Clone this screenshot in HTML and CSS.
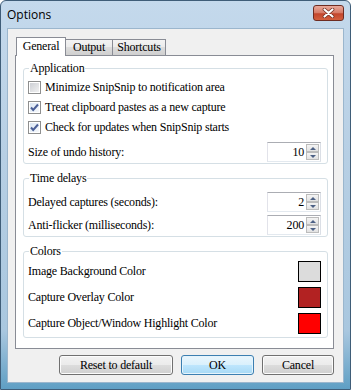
FILE: index.html
```html
<!DOCTYPE html>
<html>
<head>
    <link rel="stylesheet" href="styles.css">
</head>
<body>
<div class="window">
    <div class="titlebar">
        <span class="title">Options</span>
        <span class="close-button">
            <svg width="13" height="10" viewBox="0 0 13 10">
                <path d="M2.5 1.5 L10.5 8.5 M10.5 1.5 L2.5 8.5" stroke="#6b2a1e" stroke-width="3.6" stroke-linecap="round"/>
                <path d="M2.5 1.5 L10.5 8.5 M10.5 1.5 L2.5 8.5" stroke="#ffffff" stroke-width="2.2" stroke-linecap="round"/>
            </svg>
        </span>
    </div>
    <div class="client">
        <div class="tabs">
            <span class="tab tab-active">General</span>
            <span class="tab">Output</span>
            <span class="tab">Shortcuts</span>
        </div>
        <div class="tab-page">
            <!-- Application -->
            <fieldset class="group group-app">
                <legend>Application</legend>
                <div class="check-row"><span class="checkbox"></span>Minimize SnipSnip to notification area</div>
                <div class="check-row"><span class="checkbox checked"><svg width="11" height="11" viewBox="0 0 11 11"><path d="M2 5.5 L4.2 8 L9 2.5" fill="none" stroke="#4a5f97" stroke-width="2"/></svg></span>Treat clipboard pastes as a new capture</div>
                <div class="check-row"><span class="checkbox checked"><svg width="11" height="11" viewBox="0 0 11 11"><path d="M2 5.5 L4.2 8 L9 2.5" fill="none" stroke="#4a5f97" stroke-width="2"/></svg></span>Check for updates when SnipSnip starts</div>
                <div class="field-row undo-row">
                    <span>Size of undo history:</span>
                    <span class="spinner"><span class="spin-value">10</span><span class="spin-buttons"><span class="spin-up"></span><span class="spin-down"></span></span></span>
                </div>
            </fieldset>

            <!-- Time delays -->
            <fieldset class="group group-delays">
                <legend>Time delays</legend>
                <div class="field-row">
                    <span>Delayed captures (seconds):</span>
                    <span class="spinner"><span class="spin-value">2</span><span class="spin-buttons"><span class="spin-up"></span><span class="spin-down"></span></span></span>
                </div>
                <div class="field-row">
                    <span>Anti-flicker (milliseconds):</span>
                    <span class="spinner"><span class="spin-value">200</span><span class="spin-buttons"><span class="spin-up"></span><span class="spin-down"></span></span></span>
                </div>
            </fieldset>

            <!-- Colors -->
            <fieldset class="group group-colors">
                <legend>Colors</legend>
                <div class="color-row">
                    <span>Image Background Color</span>
                    <span class="swatch swatch-bg"></span>
                </div>
                <div class="color-row">
                    <span>Capture Overlay Color</span>
                    <span class="swatch swatch-overlay"></span>
                </div>
                <div class="color-row">
                    <span>Capture Object/Window Highlight Color</span>
                    <span class="swatch swatch-highlight"></span>
                </div>
            </fieldset>
        </div>
        <div class="button-row">
            <button class="button button-reset">Reset to default</button>
            <button class="button button-ok">OK</button>
            <button class="button button-cancel">Cancel</button>
        </div>
    </div>
</div>
</body>
</html>
```

FILE: styles.css
```css
body {
    margin: 0;
    font-family: "Liberation Serif", serif;
    font-size: 12px;
    letter-spacing: -0.2px;
    color: #000000;
}

.window {
    width: 351px;
    height: 390px;
    box-sizing: border-box;
    display: flex;
    flex-direction: column;
    padding: 0 6px 6px 6px;
    border: 1px solid #3f5d78;
    border-radius: 6px 6px 0 0;
    background: linear-gradient(#c4d9ec, #b7cfe4 40%, #a9c7df 85%, #5f9fc4);
}

.titlebar {
    height: 27px;
    display: flex;
    justify-content: space-between;
    align-items: flex-start;
}

.title {
    font-family: "Open Sans", sans-serif;
    font-size: 12px;
    letter-spacing: 0;
    margin-top: 5px;
    color: #000000;
}

.close-button {
    width: 31px;
    height: 16px;
    box-sizing: border-box;
    margin-top: 4px;
    border: 1px solid #6d2c22;
    border-radius: 3px;
    background: linear-gradient(#e9a99b, #d67a66 50%, #c2452c 55%, #d3603f);
    display: flex;
    align-items: center;
    justify-content: center;
}

.client {
    flex: 1;
    background-color: #f0f0f0;
    border: 1px solid #9bb6cd;
    padding: 8px 9px 0 7px;
}

/* tabs */
.tabs {
    display: flex;
    align-items: flex-end;
    height: 18px;
    padding-left: 2px;
}

.tab {
    height: 16px;
    box-sizing: border-box;
    border: 1px solid #898c95;
    border-bottom: none;
    background: linear-gradient(#f3f3f3, #ebebeb 50%, #dddddd 50%, #cfcfcf);
    line-height: 15px;
    text-align: center;
    margin-left: -1px;
}

.tab:nth-child(1) { width: 50px; }
.tab:nth-child(2) { width: 48px; }
.tab:nth-child(3) { width: 54px; }

.tab-active {
    height: 19px;
    margin-bottom: -1px;
    background: #ffffff;
    position: relative;
    z-index: 1;
    line-height: 17px;
}

.tab-page {
    height: 294px;
    box-sizing: border-box;
    border: 1px solid #898c95;
    background-color: #ffffff;
    padding: 6px 5px 0 7px;
}

/* group boxes */
.group {
    margin: 0;
    border: 1px solid #d5dfe5;
    border-radius: 3px;
    padding: 1px 6px 1px 4px;
    min-width: 0;
}

.group legend {
    padding: 0 1px;
    margin-left: 1px;
    line-height: 13px;
}

.group-delays {
    margin-top: 8px;
    padding-top: 7px;
}

.group-colors {
    margin-top: 8px;
    padding-top: 3px;
    padding-bottom: 3px;
}

.check-row {
    height: 20px;
    display: flex;
    align-items: center;
}

.group-app .check-row:first-of-type {
    margin-top: 1px;
}

.checkbox {
    width: 13px;
    height: 13px;
    box-sizing: border-box;
    margin-right: 4px;
    border: 1px solid #8e8f8f;
    background: linear-gradient(135deg, #c9ccd2, #f4f4f4);
    box-shadow: inset 0 0 0 1px #ffffff;
    display: flex;
    align-items: center;
    justify-content: center;
}

.checkbox.checked {
    background: linear-gradient(135deg, #d9e6f4, #f7f9fc);
}

.field-row {
    height: 20px;
    display: flex;
    justify-content: space-between;
    align-items: center;
}

.field-row + .field-row {
    margin-top: 3px;
}

.undo-row {
    margin-top: 5px;
}

/* number spinners */
.spinner {
    width: 54px;
    height: 20px;
    box-sizing: border-box;
    border: 1px solid #abadb3;
    border-color: #abadb3 #dbdfe6 #e3e9ef #e2e3ea;
    background-color: #ffffff;
    display: flex;
    align-items: stretch;
}

.spin-value {
    flex: 1;
    text-align: right;
    line-height: 18px;
    padding-right: 2px;
}

.spin-buttons {
    width: 13px;
    display: flex;
    flex-direction: column;
    margin: 1px 1px 1px 0;
}

.spin-up,
.spin-down {
    flex: 1;
    box-sizing: border-box;
    border: 1px solid #bcbcbc;
    background: linear-gradient(#f4f4f4, #e2e2e2);
    display: flex;
    align-items: center;
    justify-content: center;
}

.spin-up::after {
    content: "";
    border-left: 3px solid transparent;
    border-right: 3px solid transparent;
    border-bottom: 3px solid #4d6185;
}

.spin-down::after {
    content: "";
    border-left: 3px solid transparent;
    border-right: 3px solid transparent;
    border-top: 3px solid #4d6185;
}

/* colour swatches */
.color-row {
    height: 21px;
    display: flex;
    justify-content: space-between;
    align-items: center;
}

.color-row + .color-row {
    margin-top: 5px;
}

.swatch {
    width: 23px;
    height: 21px;
    box-sizing: border-box;
    border: 1px solid #000000;
}

.swatch-bg { background-color: #dcdcdc; }
.swatch-overlay { background-color: #b22222; }
.swatch-highlight { background-color: #ff0000; }

/* dialog buttons */
.button-row {
    display: flex;
    justify-content: flex-end;
    gap: 8px;
    margin-top: 6px;
}

.button {
    height: 20px;
    box-sizing: border-box;
    border: 1px solid #707070;
    border-radius: 3px;
    background: linear-gradient(#f2f2f2, #ebebeb 50%, #dddddd 50%, #cfcfcf);
    box-shadow: inset 0 0 0 1px #fcfcfc;
    font-family: "Liberation Serif", serif;
    font-size: 12px;
    letter-spacing: -0.2px;
    padding: 0;
    color: #000000;
}

.button-reset { width: 114px; }
.button-ok {
    width: 73px;
    border-color: #3c7fb1;
    background: linear-gradient(#eaf6fd, #d9f0fc 50%, #bee6fd 50%, #a7d9f5);
    box-shadow: inset 0 0 0 1px #e5f4fc;
}
.button-cancel { width: 72px; }
```
